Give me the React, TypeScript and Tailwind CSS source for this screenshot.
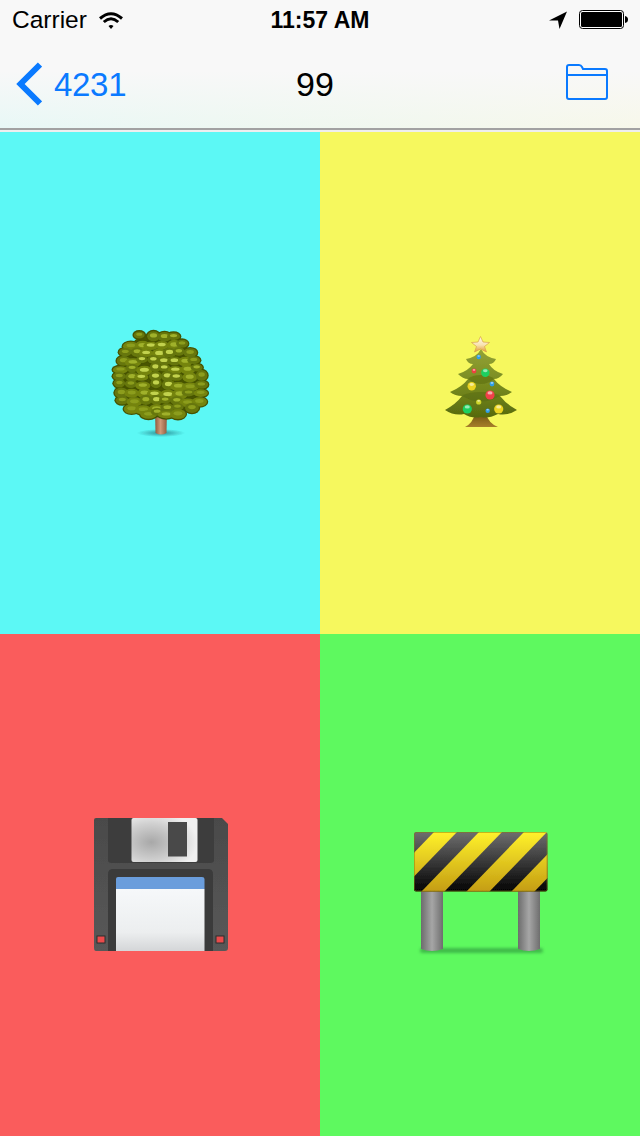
const fontClass = "font-['Liberation_Sans',Arial,sans-serif]";

// half width of the crown per row, read off the reference outline
const crownRows = [
  { y: 337, half: 17, cx: 158 },
  { y: 345, half: 26, cx: 157 },
  { y: 353, half: 32, cx: 158 },
  { y: 361, half: 36, cx: 159 },
  { y: 369, half: 38, cx: 160 },
  { y: 377, half: 40, cx: 160 },
  { y: 385, half: 41, cx: 161 },
  { y: 393, half: 41, cx: 161 },
  { y: 401, half: 38, cx: 161 },
  { y: 408, half: 30, cx: 161 },
  { y: 413, half: 14, cx: 163 },
];

function leafClumps() {
  const clumps: { x: number; y: number; rx: number; ry: number; tone: number; glow: number }[] = [];
  crownRows.forEach((row, index) => {
    const count = Math.max(2, Math.round((row.half * 2) / 11));
    for (let i = 0; i <= count; i++) {
      const seed = Math.sin(index * 12.9 + i * 78.2) * 43758.5;
      const r = seed - Math.floor(seed);
      const seed2 = Math.sin(index * 39.3 + i * 11.7) * 24634.6;
      const q = seed2 - Math.floor(seed2);
      const x = row.cx - row.half + (i * row.half * 2) / count + (q - 0.5) * 3.5;
      // brighter in the upper middle of the crown, as lit from above
      const glow = Math.max(0, 1 - Math.abs(x - 160) / 48 - Math.abs(row.y - 370) / 70);
      clumps.push({ x, y: row.y + (r - 0.5) * 4, rx: 5.5 + r * 3, ry: 3.6 + q * 1.8, tone: r, glow });
    }
  });
  return clumps;
}

function OakTree() {
  const clumps = leafClumps();
  return (
    <svg width="160" height="160" viewBox="80 303 160 160">
      <defs>
        <linearGradient id="trunk" x1="0" x2="1" y1="0" y2="0">
          <stop offset="0" stopColor="#8d5a3c" />
          <stop offset="0.45" stopColor="#d09a78" />
          <stop offset="1" stopColor="#8f5c3e" />
        </linearGradient>
        <radialGradient id="treeShadow">
          <stop offset="0" stopColor="#1d6f78" stopOpacity="0.75" />
          <stop offset="1" stopColor="#1d6f78" stopOpacity="0" />
        </radialGradient>
        <filter id="softTree">
          <feGaussianBlur stdDeviation="0.5" />
        </filter>
      </defs>
      <g filter="url(#softTree)">
        <ellipse cx="161" cy="433" rx="24" ry="4" fill="url(#treeShadow)" />
        <path d="M155 410 L167 410 L166.500 433 Q161 436 155.500 433 Z" fill="url(#trunk)" />
        <path d="M135 340 Q160 324 183 340 L196 362 L204 392 Q190 418 160 417 Q130 418 117 392 L122 362 Z" fill="#4c5804" />
        {clumps.map((c, i) => (
          <ellipse key={`d${i}`} cx={c.x} cy={c.y} rx={c.rx + 1.3} ry={c.ry + 1.3} fill="#465204" />
        ))}
        {clumps.map((c, i) => (
          <g key={`l${i}`}>
            <ellipse cx={c.x} cy={c.y} rx={c.rx} ry={c.ry} fill={c.tone > 0.5 ? "#74840f" : "#667609"} />
            <ellipse
              cx={c.x}
              cy={c.y - 0.8}
              rx={c.rx * 0.55}
              ry={c.ry * 0.42}
              fill={c.glow > 0.45 ? "#c2d24e" : c.glow > 0.2 ? "#a0b12c" : "#8c9d1e"}
            />
          </g>
        ))}
      </g>
    </svg>
  );
}

const ornaments = [
  { x: 478.7, y: 358, r: 2.2, c: "#2f9fe8" },
  { x: 474, y: 372, r: 2.4, c: "#ee4040" },
  { x: 485.3, y: 373.7, r: 4.2, c: "#1fd060" },
  { x: 492, y: 385, r: 2.4, c: "#2f9fe8" },
  { x: 471.7, y: 387.3, r: 4.2, c: "#ecd420" },
  { x: 490, y: 396, r: 4.6, c: "#f04048" },
  { x: 478.7, y: 403, r: 2.6, c: "#cfd62c" },
  { x: 467.3, y: 410, r: 4.6, c: "#1fd060" },
  { x: 487.7, y: 411.7, r: 2.2, c: "#2f9fe8" },
  { x: 498.7, y: 410, r: 4.6, c: "#ecd420" },
];

function ChristmasTree() {
  return (
    <svg width="160" height="160" viewBox="400 304 160 160">
      <defs>
        <linearGradient id="fir" x1="0" x2="0" y1="0" y2="1">
          <stop offset="0" stopColor="#94a336" />
          <stop offset="0.6" stopColor="#73861c" />
          <stop offset="1" stopColor="#56690e" />
        </linearGradient>
        <linearGradient id="firTrunk" x1="0" x2="0" y1="0" y2="1">
          <stop offset="0" stopColor="#6e5210" />
          <stop offset="1" stopColor="#a87f2a" />
        </linearGradient>
        <linearGradient id="star" x1="0" x2="0" y1="0" y2="1">
          <stop offset="0" stopColor="#fffbee" />
          <stop offset="0.55" stopColor="#f8e3b0" />
          <stop offset="1" stopColor="#e09a30" />
        </linearGradient>
        <filter id="softFir">
          <feGaussianBlur stdDeviation="0.35" />
        </filter>
      </defs>
      <g filter="url(#softFir)">
        <path d="M475 414 L486 414 Q488 424 498 428 L465 428 Q473 424 475 414 Z" fill="url(#firTrunk)" />
        <path
          d="M481 350 Q485 358 496 360 Q494 365 489 365 Q493 372 503 375 Q499 380 494 380 Q500 388 512 393 Q507 397 500 397 Q506 405 517 411 Q508 417 498 415 Q488 420 481 418 Q472 420 464 415 Q454 417 445 411 Q456 405 462 397 Q455 397 450 393 Q462 388 468 380 Q463 380 458 375 Q468 372 473 365 Q468 365 466 360 Q477 358 481 350 Z"
          fill="url(#fir)"
        />
        <path d="M468 380 Q481 390 494 380 Q490 376 481 376 Q472 376 468 380 Z" fill="#55680e" opacity="0.5" />
        <path d="M462 397 Q481 408 500 397 Q494 393 481 393 Q468 393 462 397 Z" fill="#55680e" opacity="0.5" />
        {ornaments.map((o, i) => (
          <g key={i}>
            <circle cx={o.x} cy={o.y} r={o.r} fill={o.c} />
            <ellipse cx={o.x} cy={o.y - o.r * 0.45} rx={o.r * 0.55} ry={o.r * 0.35} fill="#ffffff" opacity="0.55" />
          </g>
        ))}
        <path
          d="M480.500 337.500 L483 343 L489.500 343.500 L484.500 347.500 L486.500 353 L480.500 350 L474.500 353 L476.500 347.500 L471.500 343.500 L478 343 Z"
          fill="url(#star)"
          stroke="#d9a24a"
          strokeWidth="0.7"
        />
      </g>
    </svg>
  );
}

function FloppyDisk() {
  return (
    <svg width="160" height="160" viewBox="80 805 160 160">
      <defs>
        <linearGradient id="shell" x1="0" x2="0" y1="0" y2="1">
          <stop offset="0" stopColor="#4a4a4a" />
          <stop offset="1" stopColor="#585858" />
        </linearGradient>
        <radialGradient id="shutter" cx="0.3" cy="0.55" r="0.7">
          <stop offset="0" stopColor="#a8a8a8" />
          <stop offset="0.6" stopColor="#d0d0d0" />
          <stop offset="1" stopColor="#f0f0f0" />
        </radialGradient>
        <linearGradient id="label" x1="0" x2="0" y1="0" y2="1">
          <stop offset="0" stopColor="#f6f8fa" />
          <stop offset="0.7" stopColor="#eceeef" />
          <stop offset="1" stopColor="#d4d6d8" />
        </linearGradient>
        <filter id="softDisk">
          <feGaussianBlur stdDeviation="0.4" />
        </filter>
      </defs>
      <g filter="url(#softDisk)">
        <path d="M96 818 L222 818 L228 824 L228 948 Q228 951 225 951 L96 951 Q94 951 94 948 L94 820 Q94 818 96 818 Z" fill="url(#shell)" />
        <path d="M108 818 L214 818 L214 860 Q214 863 211 863 L111 863 Q108 863 108 860 Z" fill="#3e3e3e" />
        <rect x="131.500" y="818" width="66" height="44" rx="2" fill="url(#shutter)" />
        <rect x="168" y="822" width="19" height="34.500" fill="#4a4a4a" />
        <path d="M113 869 L208 869 Q213 869 213 874 L213 951 L108 951 L108 874 Q108 869 113 869 Z" fill="#3b3b3b" />
        <path d="M118 877 L202 877 Q204.500 877 204.500 879 L204.500 889 L116 889 L116 879 Q116 877 118 877 Z" fill="#6a9ddc" />
        <rect x="116" y="889" width="88.500" height="62" fill="url(#label)" />
        <rect x="97" y="936" width="8" height="7" fill="#ea4c4c" stroke="#2c2c2c" />
        <rect x="216" y="936" width="8" height="7" fill="#ea4c4c" stroke="#2c2c2c" />
      </g>
    </svg>
  );
}

const stripeStarts = [389, 434, 479, 524, 569];

function Barricade() {
  return (
    <svg width="160" height="160" viewBox="400 805 160 160">
      <defs>
        <linearGradient id="post" x1="0" x2="1" y1="0" y2="0">
          <stop offset="0" stopColor="#6c6c6c" />
          <stop offset="0.5" stopColor="#a6a6a6" />
          <stop offset="1" stopColor="#6e6e6e" />
        </linearGradient>
        <linearGradient id="boardDark" x1="0" x2="0" y1="0" y2="1">
          <stop offset="0" stopColor="#6e6e6e" />
          <stop offset="1" stopColor="#020202" />
        </linearGradient>
        <linearGradient id="boardYellow" x1="0" x2="0" y1="0" y2="1">
          <stop offset="0" stopColor="#fff22c" />
          <stop offset="1" stopColor="#c49c12" />
        </linearGradient>
        <clipPath id="boardClip">
          <rect x="414" y="832" width="133.500" height="59.500" rx="2" />
        </clipPath>
        <filter id="softShadow" x="-10%" y="-100%" width="120%" height="300%">
          <feGaussianBlur stdDeviation="1.800" />
        </filter>
        <filter id="softBoard">
          <feGaussianBlur stdDeviation="0.35" />
        </filter>
      </defs>
      <rect x="420" y="948" width="123" height="5" rx="2.500" fill="#2f9a3c" opacity="0.65" filter="url(#softShadow)" />
      <g filter="url(#softBoard)">
        <path d="M421 888 L443 888 L443 949 Q432 953 421 949 Z" fill="url(#post)" />
        <path d="M518 888 L540 888 L540 949 Q529 953 518 949 Z" fill="url(#post)" />
        <g clipPath="url(#boardClip)">
          <rect x="414" y="832" width="134" height="60" fill="url(#boardDark)" />
          <g>
            {stripeStarts.map((x) => (
              <polygon key={x} points={`${x},832 ${x + 23},832 ${x - 35},892 ${x - 58},892`} fill="url(#boardYellow)" />
            ))}
          </g>
        </g>
        <rect x="414.500" y="832.500" width="132.500" height="58.500" rx="2" fill="none" stroke="#8a7a10" strokeOpacity="0.5" />
      </g>
    </svg>
  );
}

function Wifi() {
  return (
    <svg width="24" height="17" viewBox="0 0 24 17" fill="none" stroke="#000000" strokeWidth="3">
      <path d="M1 6.500 Q12 -3 23 6.500" />
      <path d="M4.800 10 Q12 3.600 19.200 10" />
      <path d="M9.500 14 L12 17 L14.500 14 Q12 12 9.500 14 Z" fill="#000000" stroke="none" />
    </svg>
  );
}

function Battery() {
  return (
    <svg width="50" height="20" viewBox="0 0 50 20">
      <rect x="0.500" y="0.500" width="44" height="18" rx="3" fill="#ffffff" stroke="#000000" />
      <rect x="2" y="2" width="41" height="15" rx="1.500" fill="#000000" />
      <path d="M46 6 Q49 6.500 49 9.500 Q49 12.500 46 13 Z" fill="#000000" />
    </svg>
  );
}

function BackChevron() {
  return (
    <svg width="26" height="44" viewBox="0 0 26 44" fill="none" stroke="#0a7aff" strokeWidth="6">
      <path d="M24 2.500 L4.500 22 L24 41.500" />
    </svg>
  );
}

function FolderIcon() {
  return (
    <svg width="44" height="38" viewBox="0 0 44 38" fill="none" stroke="#0a7aff" strokeWidth="2">
      <path d="M2 9 V4 Q2 2 4 2 H14 Q16 2 17 4 L18 6 H40 Q42 6 42 8 V34 Q42 36 40 36 H4 Q2 36 2 34 Z" />
      <path d="M2 12 H42" />
    </svg>
  );
}

const cells = [
  { bg: "bg-[#5cf8f5]", art: <OakTree /> },
  { bg: "bg-[#f6f85e]", art: <ChristmasTree /> },
  { bg: "bg-[#fa5c5c]", art: <FloppyDisk /> },
  { bg: "bg-[#5ef95f]", art: <Barricade /> },
];

export default function App() {
  return (
    <div className={`w-[640px] h-[1136px] flex flex-col overflow-hidden bg-white ${fontClass}`}>
      <div className="h-[128px] bg-[linear-gradient(to_bottom,#f8f8f8_55%,transparent),linear-gradient(to_right,#e8f8f6,#f7f8ea)]">
        <div className="h-[40px] grid grid-cols-3 items-center text-black text-[24.500px] leading-none">
          <div className="flex items-center gap-[12px] pl-[12px]">
            <span>Carrier</span>
            <Wifi />
          </div>
          <div className="text-center font-bold text-[23px] whitespace-nowrap">11:57 AM</div>
          <div className="flex items-center justify-end pr-[11px] gap-[12px]">
            <svg width="18" height="18" viewBox="0 0 18 18">
              <path d="M0 9.500 L18 0.500 L10.500 18 L9 9.500 Z" fill="#000000" />
            </svg>
            <Battery />
          </div>
        </div>
        <div className="h-[88px] grid grid-cols-3 items-center">
          <div className="flex items-center gap-[12px] pl-[16px] text-[#0a7aff] text-[33px] leading-none tracking-[-0.3px]">
            <BackChevron />
            <span>4231</span>
          </div>
          <div className="text-center text-black text-[34px] leading-none pr-[10px]">99</div>
          <div className="flex justify-end pr-[31px] mb-[4px]">
            <FolderIcon />
          </div>
        </div>
      </div>
      <div className="h-[2px] bg-[#a2a2a2]" />
      <div className="h-[2px] bg-[#eeeeee]" />
      <div className="flex-1 grid grid-cols-2 grid-rows-2">
        {cells.map((cell, i) => (
          <div key={i} className={`flex items-center justify-center ${cell.bg}`}>
            {cell.art}
          </div>
        ))}
      </div>
    </div>
  );
}
